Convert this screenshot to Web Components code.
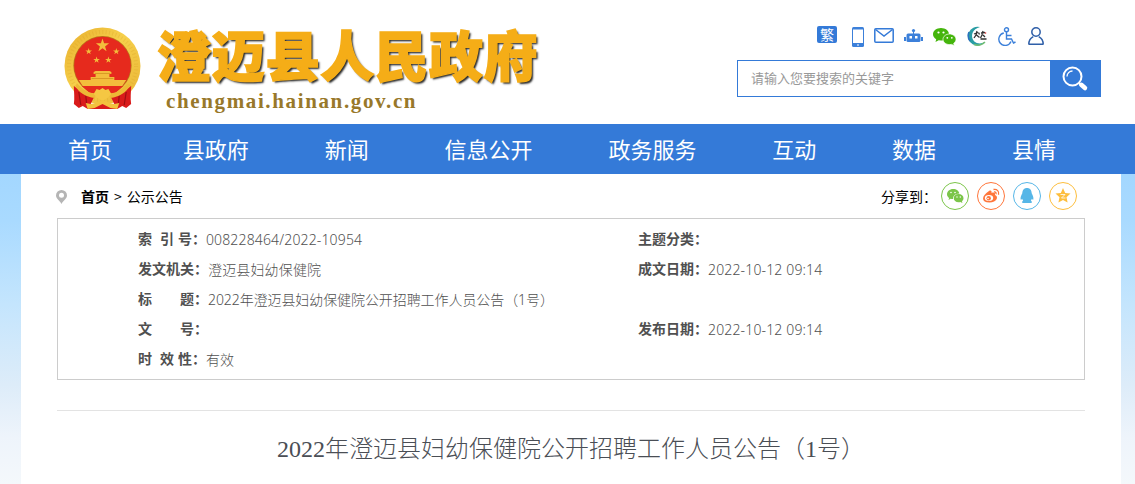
<!DOCTYPE html>
<html lang="zh-CN">
<head>
<meta charset="UTF-8">
<title>澄迈县人民政府</title>
<style>
  body {
    margin: 0;
    height: 484px;
    overflow: hidden;
    background: #fff;
    font-family: "Noto Sans", "Noto Sans CJK SC", sans-serif;
    color: #000;
  }
</style>
</head>
<body>
<gov-page>
  <gov-header slot="header"></gov-header>
  <gov-nav slot="nav" data-items="首页,县政府,新闻,信息公开,政务服务,互动,数据,县情"></gov-nav>
  <gov-crumbs></gov-crumbs>
  <info-table>
    <info-row data-label="索&nbsp; 引 号：">008228464/2022-10954</info-row>
    <info-row data-label="主题分类："></info-row>
    <info-row data-label="发文机关：">澄迈县妇幼保健院</info-row>
    <info-row data-label="成文日期：">2022-10-12 09:14</info-row>
    <info-row data-label="标　　题：" style="--spacing: -.08px">2022年澄迈县妇幼保健院公开招聘工作人员公告（1号）</info-row>
    <span></span>
    <info-row data-label="文　　号："></info-row>
    <info-row data-label="发布日期：">2022-10-12 09:14</info-row>
    <info-row data-label="时&nbsp; 效 性：">有效</info-row>
  </info-table>
  <article-title>2022年澄迈县妇幼保健院公开招聘工作人员公告（1号）</article-title>
</gov-page>

<script>
class GovPage extends HTMLElement {
  constructor() {
    super();
    this.attachShadow({ mode: 'open' });
  }

  connectedCallback() {
    this.shadowRoot.innerHTML = `
      <style>
        :host { display: flex; flex-direction: column; height: 484px; }
        .back { flex: 1; background: linear-gradient(#a3d7ff, #a9daff 15%, #c4e5fd 42%, #ddecf9 68%, #eef4fb 85%, #f4f8fb); }
        main { box-sizing: border-box; width: 1100px; height: 100%; margin-left: 21px; padding: 0 36px; background: #fff; }
      </style>
      <slot name="header"></slot>
      <slot name="nav"></slot>
      <div class="back"><main><slot></slot></main></div>
    `;
  }
}
customElements.define('gov-page', GovPage);

class GovEmblem extends HTMLElement {
  constructor() {
    super();
    this.attachShadow({ mode: 'open' });
  }

  connectedCallback() {
    const star = '0,-7 1.6,-2.2 6.7,-2.2 2.6,.9 4.1,5.7 0,2.7 -4.1,5.7 -2.6,.9 -6.7,-2.2 -1.6,-2.2';
    this.shadowRoot.innerHTML = `
      <style>
        :host { display: block; }
        svg { display: block; }
      </style>
      <svg width="77" height="83" viewBox="0 0 78 83" preserveAspectRatio="none">
        <defs>
          <linearGradient id="g" x1="0" y1="0" x2="1" y2="1">
            <stop offset="0" stop-color="#e8ae2c"/><stop offset=".45" stop-color="#f6d04c"/><stop offset="1" stop-color="#eab434"/>
          </linearGradient>
        </defs>
        <circle cx="39" cy="39" r="38.5" fill="url(#g)"/>
        <circle cx="39" cy="39" r="34" fill="none" stroke="#d99a20" stroke-width="4" stroke-dasharray="1 2.400" opacity=".25"/>
        <circle cx="39" cy="38.500" r="29.500" fill="#b9761a"/>
        <circle cx="39" cy="38.500" r="28.700" fill="#e62a1d"/>
        <g fill="#f3bd3c">
          <polygon transform="translate(39 18.500)" points="${star}"/>
          <polygon transform="translate(25 24.500) scale(.5)" points="${star}"/>
          <polygon transform="translate(53 24.500) scale(.5)" points="${star}"/>
          <polygon transform="translate(33 33) scale(.5)" points="${star}"/>
          <polygon transform="translate(45 33) scale(.5)" points="${star}"/>
          <path d="M30 45l2-1h14l2 1v2h-2v3h5v2h-2v2h-20v-2h-2v-2h5v-3h-2z"/>
          <path d="M15 53h12v-1h24v1h12l-4 6H19z"/>
        </g>
        <path d="M31 46.500h16M28 51.500h22" stroke="#d08a1c" stroke-width=".7"/>
        <path d="M18 59h42l-8 7H26z" fill="#e62a1d"/>
        <path d="M10 59c6 5 12 8 21 10l-4 8h24l-4-8c9-2 15-5 21-10 0 6-1 12 0 18l-5 4-4-2-5 3H24l-5-3-4 2-5-4c1-6 0-12 0-18z" fill="#d91b1b"/>
        <path d="M15 65l2 13M63 65l-2 13M22 68l1 10M56 68l-1 10" stroke="#9f0e12" stroke-width="1.200"/>
        <path d="M13 56c6 7 12 10 20 11l-2 4C22 70 15 65 12 60zM65 56c-6 7-12 10-20 11l2 4c9-1 16-6 19-11z" fill="#edb936"/>
        <path d="M30 67l3-5 3 1 3-2 3 2 3-1 3 5-4 4-5 3-5-3z" fill="#f5c743"/>
        <path d="M24 82l-2-6 5 1 5-1 7-3 7 3 5 1 5-1-2 6-7-1-8-4-8 4z" fill="#f3c23d"/>
      </svg>
    `;
  }
}
customElements.define('gov-emblem', GovEmblem);

class GovHeader extends HTMLElement {
  constructor() {
    super();
    this.attachShadow({ mode: 'open' });
  }

  connectedCallback() {
    this.shadowRoot.innerHTML = `
      <style>
        :host { display: flex; box-sizing: border-box; height: 124px; padding-left: 64px; background: #fff; }
        gov-emblem { margin-top: 27px; }
        .name { width: 400px; margin-left: 16px; padding-top: 27px; }
        h1 {
          margin: 0;
          height: 63px;
          font: 900 54px/54px "Noto Sans CJK SC", sans-serif;
          letter-spacing: .4px;
          color: #f5ad17;
          white-space: nowrap;
          -webkit-text-stroke: 1.500px #f5ad17;
          text-shadow: 2px 2px 2px rgba(0, 0, 0, .85);
        }
        .url {
          margin: 0 0 0 9px;
          font: bold 21px/22px "Liberation Serif", serif;
          letter-spacing: 1.630px;
          color: #98782a;
        }
        .tools { width: 364px; margin-left: 180px; padding-top: 24px; }
        .icons { height: 24px; display: block; }
        .search { display: flex; height: 37px; margin-top: 12px; }
        .box {
          box-sizing: border-box;
          flex: 1;
          padding-left: 13px;
          border: 1px solid #347ad8;
          border-right: 0;
          font: 13px/33px "Noto Sans CJK SC", sans-serif;
          color: #999;
        }
        .btn { width: 51px; background: #347ad8; }
        .btn svg { display: block; margin: 6px 0 0 12px; }
      </style>
      <gov-emblem></gov-emblem>
      <div class="name">
        <h1>澄迈县人民政府</h1>
        <p class="url">chengmai.hainan.gov.cn</p>
      </div>
      <div class="tools">
        <tool-icons class="icons"></tool-icons>
        <div class="search">
          <div class="box">请输入您要搜索的关键字</div>
          <div class="btn">
            <svg width="27" height="27" viewBox="0 0 27 27" fill="none" stroke="#fff">
              <circle cx="10.500" cy="10.500" r="9" stroke-width="2"/>
              <path d="M5 10.500a5.500 5.500 0 0 1 5.500-5.500" stroke-width="1.300"/>
              <path d="M17 17l2 2" stroke-width="2"/>
              <path d="M19.300 18.800l3.700 3.200" stroke-width="4.500" stroke-linecap="round"/>
            </svg>
          </div>
        </div>
      </div>
    `;
  }
}
customElements.define('gov-header', GovHeader);

class ToolIcons extends HTMLElement {
  constructor() {
    super();
    this.attachShadow({ mode: 'open' });
  }

  connectedCallback() {
    this.shadowRoot.innerHTML = `
      <style>
        :host { display: block; }
        div { display: flex; align-items: center; height: 24px; padding-left: 80px; }
        .trad {
          width: 20px; height: 17px; margin: 0 15px 3px 0;
          border-radius: 2px;
          background: #347ad8;
          color: #fff;
          font: 14px/16px "Noto Sans CJK SC", sans-serif;
          text-align: center;
        }
      </style>
      <div>
        <span class="trad">繁</span>
        <svg width="12" height="20" viewBox="0 0 12 20" style="margin: 2px 10px 0 0">
          <rect width="12" height="20" rx="1.500" fill="#3c80da"/><path d="M1 2.500h10V16H1z" fill="#fff"/><path d="M5 18h2" stroke="#fff"/>
        </svg>
        <svg width="20" height="15" viewBox="0 0 20 15" style="margin: 0 10px 1px 0" fill="none" stroke="#347ad8" stroke-width="1.500">
          <rect x=".8" y=".8" width="18.400" height="13.400" rx="1"/><path d="M1.500 1.500L10 8l8.500-6.500"/>
        </svg>
        <svg width="19" height="14" viewBox="0 0 19 14" style="margin: 0 10px 1px 0" fill="#3c80da">
          <circle cx="9.500" cy="1.600" r="1.600"/><path d="M9 2h1v4H9zM0 8h2v4H0zM17 8h2v4h-2z"/>
          <rect x="2.500" y="4.500" width="14" height="8.500" rx="1.500"/>
          <path d="M5.500 7h2.500v2.500H5.500zM11 7h2.500v2.500H11z" fill="#fff"/>
        </svg>
        <svg width="23" height="18" viewBox="0 0 23 18" style="margin: 2px 11px 0 0">
          <path d="M8 0c4.500 0 8 2.800 8 6.300s-3.500 6.300-8 6.300l-2.300-.3L2.500 14l.7-2.800C1.200 10 0 8.300 0 6.300 0 2.800 3.500 0 8 0z" fill="#45b50c"/>
          <path d="M16.500 6c3.600 0 6.500 2.400 6.500 5.300 0 1.600-.9 3-2.300 4l.6 2.300-2.700-1.200-2.100.2c-3.600 0-6.500-2.400-6.500-5.300S12.900 6 16.500 6z" fill="#45b50c" stroke="#fff" stroke-width=".7"/>
          <g fill="#fff"><circle cx="5.500" cy="4.500" r="1.100"/><circle cx="10.500" cy="4.500" r="1.100"/><circle cx="14.300" cy="9.800" r=".9"/><circle cx="18.800" cy="9.800" r=".9"/></g>
        </svg>
        <svg width="21" height="21" viewBox="0 0 21 21" style="margin-right: 10px" fill="none">
          <path d="M13 1A9.500 9.500 0 1 0 18 16C11 20 3 15 5.500 7c1-3 4-5 7.500-6z" fill="#299da4"/>
          <path d="M2 6A9 9 0 0 0 3 15" stroke="#2a72bd" stroke-width="1.500"/>
          <path d="M7 18.500c4 1.500 8 .5 11-2.500" stroke="#71bd74" stroke-width="1.500"/>
          <path d="M7 8l4-1.500M10 5l-1 4-2 3M9.500 9l3 2.500M11.500 6.500l1 2M14 7l4-.5M16 5l-1 4-1.500 3M16 9l2 2M13.500 13h6" stroke="#333" stroke-width="1.300"/>
          <circle cx="18.500" cy="7" r=".8" fill="#d33"/>
        </svg>
        <svg width="18" height="19" viewBox="0 0 18 19" style="margin-right: 12px" fill="none" stroke="#3c80da" stroke-width="1.400">
          <circle cx="8.500" cy="2.800" r="2"/><path d="M8.500 5v7h5l2 4 2-1M8.500 8.500h5M5.800 6A6.300 6.300 0 1 0 13 14.500"/>
        </svg>
        <svg width="16" height="18" viewBox="0 0 16 18" fill="none" stroke="#2f5fa8" stroke-width="1.500">
          <circle cx="8" cy="5" r="4.200"/><path d="M.8 17.200c0-4 2-6.300 4.500-7.600M15.200 17.200c0-4-2-6.300-4.500-7.600M.5 17.200h15"/>
        </svg>
      </div>
    `;
  }
}
customElements.define('tool-icons', ToolIcons);

class GovNav extends HTMLElement {
  constructor() {
    super();
    this.attachShadow({ mode: 'open' });
  }

  connectedCallback() {
    const items = this.getAttribute('data-items').split(',');
    this.shadowRoot.innerHTML = `
      <style>
        :host { display: block; height: 50px; background: #347ad8; }
        nav {
          display: flex;
          justify-content: space-between;
          width: 988px;
          margin-left: 68px;
          font: 22px/49px "Noto Sans CJK SC", sans-serif;
          color: #fff;
        }
        span:first-child { margin-right: -5px; }
      </style>
      <nav>${items.map(item => `<span>${item}</span>`).join('')}</nav>
    `;
  }
}
customElements.define('gov-nav', GovNav);

class ShareIcon extends HTMLElement {
  constructor() {
    super();
    this.attachShadow({ mode: 'open' });
  }

  connectedCallback() {
    const color = this.getAttribute('data-color');
    this.shadowRoot.innerHTML = `
      <style>
        :host { display: block; box-sizing: border-box; width: 28px; height: 28px; border: 1px solid ${color}; border-radius: 50%; color: ${color}; }
      </style>
      <slot></slot>
    `;
  }
}
customElements.define('share-icon', ShareIcon);

class GovCrumbs extends HTMLElement {
  constructor() {
    super();
    this.attachShadow({ mode: 'open' });
  }

  connectedCallback() {
    this.shadowRoot.innerHTML = `
      <style>
        :host { display: flex; align-items: center; height: 44px; font: 14px/20px "Noto Sans CJK SC", sans-serif; }
        .pin { margin: 2px 14px 0 -1px; }
        .path { flex: 1; margin-bottom: 1px; }
        .path span { margin: 0 5px; }
        .share { margin: 0 4px 1px 0; }
        share-icon { margin-right: 8px; }
        share-icon svg { display: block; }
      </style>
      <svg class="pin" width="11" height="14" viewBox="0 0 11 14"><path d="M5.500 0A5.500 5.500 0 0 0 0 5.500C0 9 4 10.500 5.500 14 7 10.500 11 9 11 5.500A5.500 5.500 0 0 0 5.500 0z" fill="#b5b5b5"/><circle cx="5.500" cy="5.200" r="2.500" fill="#fff"/></svg>
      <div class="path"><b>首页</b><span>&gt;</span>公示公告</div>
      <span class="share">分享到：</span>
      <share-icon data-color="#7bc549">
        <svg width="26" height="26" viewBox="0 0 26 26" fill="currentColor">
          <path d="M11 6c3.600 0 6 2 6.300 4.400-4 .1-6.500 2.500-6.300 5.600-.8.100-1.600 0-2.300-.2L6.500 17l.6-2C5.800 14 5 12.800 5 11.200 5 8.300 7.700 6 11 6z"/>
          <path d="M16.500 11c3 0 5 2 5 4.200 0 1.200-.6 2.200-1.500 3l.4 1.800-2-1c-3.800.9-6.700-1.100-6.700-3.800 0-2.400 2-4.200 4.800-4.200z"/>
          <g fill="#fff"><circle cx="9" cy="9.500" r=".8"/><circle cx="13" cy="9.500" r=".8"/><circle cx="15" cy="14" r=".7"/><circle cx="18.300" cy="14" r=".7"/></g>
        </svg>
      </share-icon>
      <share-icon data-color="#ff763b">
        <svg width="26" height="26" viewBox="0 0 26 26" fill="none" stroke="currentColor">
          <path d="M11 8c2-1 3 0 2.500 2 2.500-1 4-.3 3.500 2 4 1.500 2 7.500-5.500 7.500C3 19.500 3 13 11 8z" fill="currentColor" stroke="none"/>
          <ellipse cx="11" cy="15" rx="4.200" ry="2.900" fill="#fff" stroke="none"/>
          <circle cx="10.700" cy="15.200" r="2.200" fill="currentColor" stroke="none"/><circle cx="10" cy="15.500" r=".8" fill="#fff" stroke="none"/>
          <path d="M15.500 6.500c3.500-.7 6 2 5 5.300M16 9c1.500-.3 2.500.8 2 2.300" stroke-width="1.300"/>
        </svg>
      </share-icon>
      <share-icon data-color="#56b6e7">
        <svg width="26" height="26" viewBox="0 0 26 26" fill="currentColor">
          <path d="M13 5c3 0 4.700 2.200 4.700 5.300 1 2 2 4 1.700 6.200l-.7.300-.8-1-1 2c1.400.7 1.500 2.200 0 2.200H9.100c-1.500 0-1.400-1.500 0-2.200l-1-2-.8 1-.7-.3c-.3-2.200.7-4.200 1.700-6.200C8.300 7.200 10 5 13 5z"/>
        </svg>
      </share-icon>
      <share-icon data-color="#fdbe3d">
        <svg width="26" height="26" viewBox="0 0 26 26" fill="currentColor">
          <path d="M13 5l2.200 5 5.300.6-4 3.700 1.100 5.200-4.600-2.600-4.600 2.600 1.100-5.200-4-3.700 5.300-.6z"/>
          <path d="M10.500 11.500h4.500l-3.500 3.500h4" fill="none" stroke="#fff" stroke-width=".8"/>
        </svg>
      </share-icon>
    `;
  }
}
customElements.define('gov-crumbs', GovCrumbs);

class InfoTable extends HTMLElement {
  constructor() {
    super();
    this.attachShadow({ mode: 'open' });
  }

  connectedCallback() {
    this.shadowRoot.innerHTML = `
      <style>
        :host {
          display: grid;
          box-sizing: border-box;
          grid-template-columns: 500px 1fr;
          grid-auto-rows: 30px;
          height: 162px;
          padding: 4px 0 0 80px;
          border: 1px solid #ccc;
        }
      </style>
      <slot></slot>
    `;
  }
}
customElements.define('info-table', InfoTable);

class InfoRow extends HTMLElement {
  constructor() {
    super();
    this.attachShadow({ mode: 'open' });
  }

  connectedCallback() {
    const label = this.getAttribute('data-label');
    this.shadowRoot.innerHTML = `
      <style>
        :host { display: flex; white-space: nowrap; font-size: 14px; line-height: 30px; color: #505050; }
        b { font-family: "Noto Sans CJK SC", sans-serif; word-spacing: .8px; }
        .value { padding-top: 2px; font-weight: 300; letter-spacing: var(--spacing, .15px); }
      </style>
      <b>${label}</b><span class="value"><slot></slot></span>
    `;
  }
}
customElements.define('info-row', InfoRow);

class ArticleTitle extends HTMLElement {
  constructor() {
    super();
    this.attachShadow({ mode: 'open' });
  }

  connectedCallback() {
    this.shadowRoot.innerHTML = `
      <style>
        :host { display: block; margin-top: 30px; border-top: 1px solid #e3e3e3; }
        h2 {
          margin: 18px 0 0;
          font: 300 24px/40px "Liberation Serif", "Noto Sans CJK SC", sans-serif;
          text-align: center;
          color: #4a4e55;
        }
      </style>
      <h2><slot></slot></h2>
    `;
  }
}
customElements.define('article-title', ArticleTitle);
</script>
</body>
</html>
